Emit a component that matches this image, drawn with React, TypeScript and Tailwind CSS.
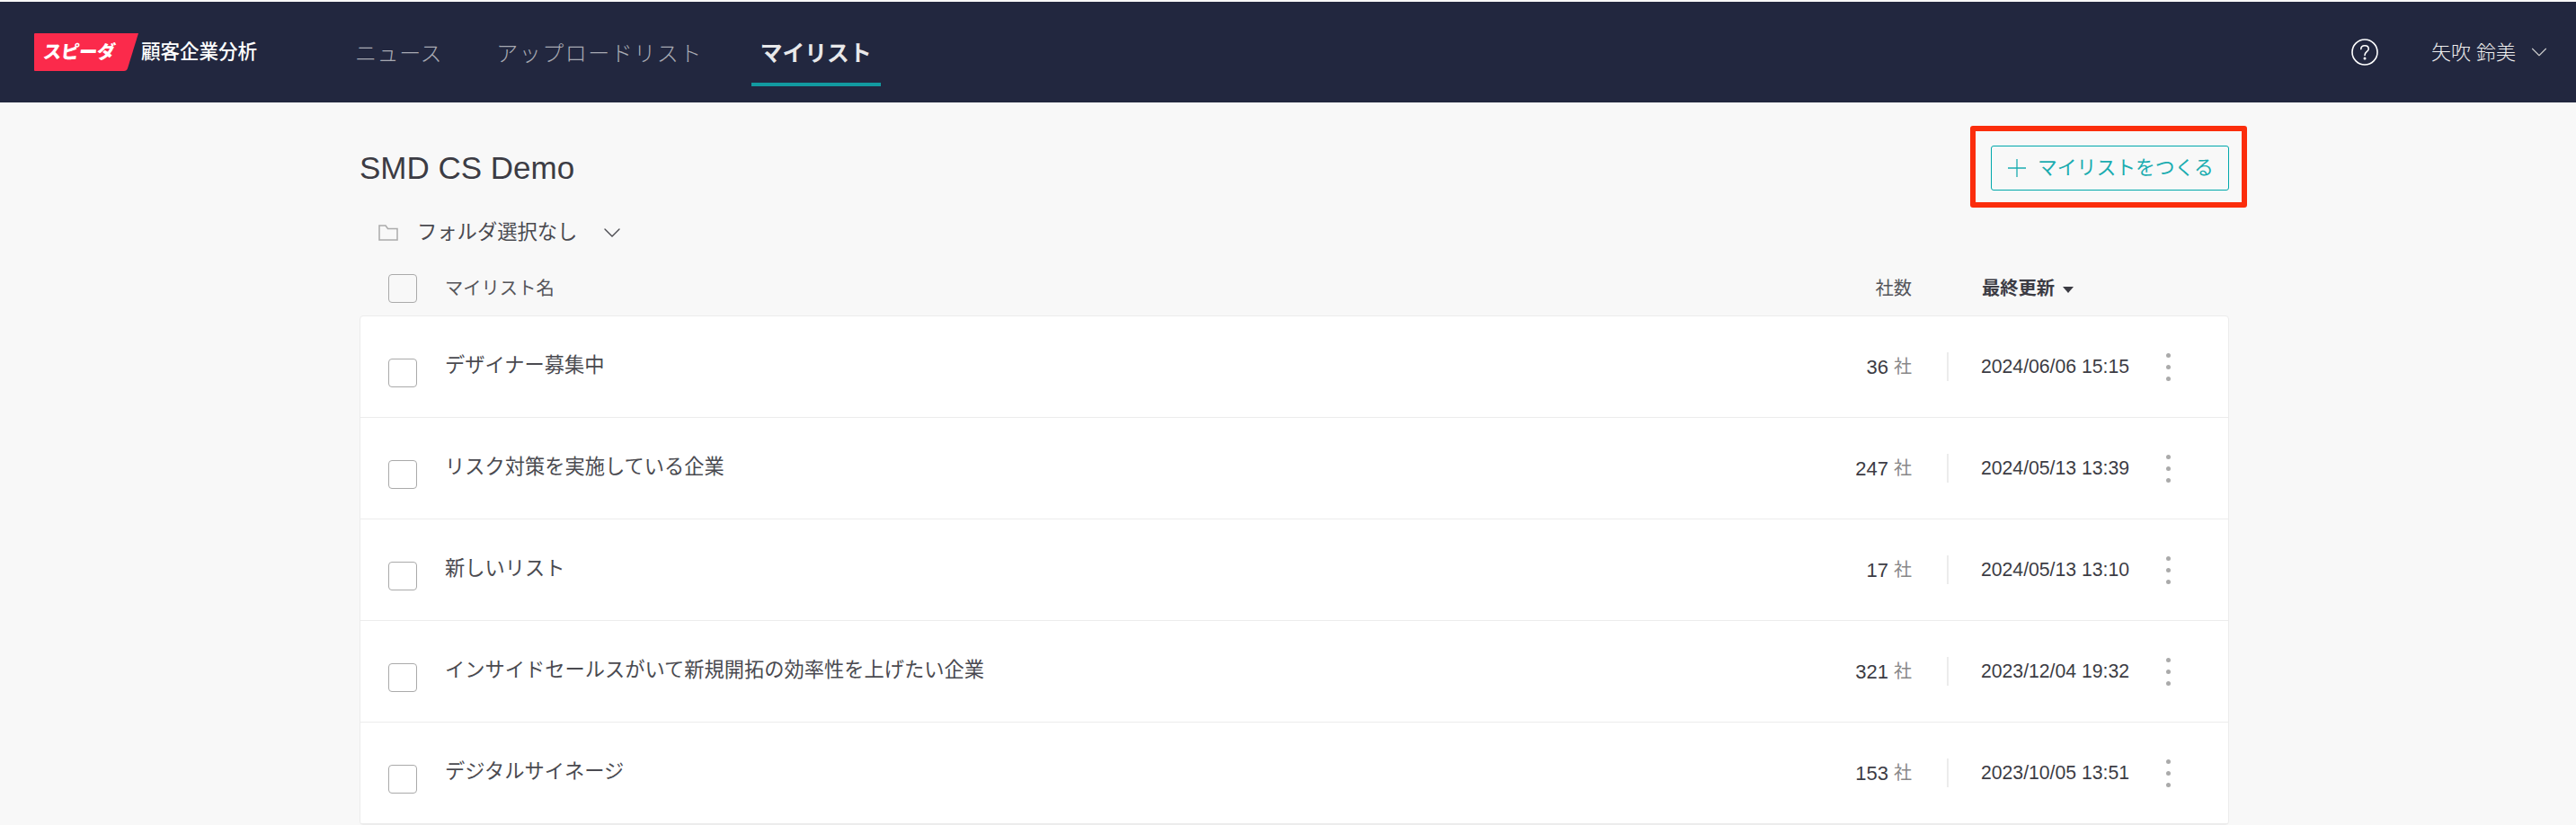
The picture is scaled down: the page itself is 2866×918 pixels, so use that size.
import { ChevronDown } from "lucide-react";

const rows = [
  { name: "デザイナー募集中", count: 36, date: "2024/06/06 15:15" },
  { name: "リスク対策を実施している企業", count: 247, date: "2024/05/13 13:39" },
  { name: "新しいリスト", count: 17, date: "2024/05/13 13:10" },
  { name: "インサイドセールスがいて新規開拓の効率性を上げたい企業", count: 321, date: "2023/12/04 19:32" },
  { name: "デジタルサイネージ", count: 153, date: "2023/10/05 13:51" },
];

function Checkbox({ className = "" }: { className?: string }) {
  return <div className={`h-8 w-8 shrink-0 rounded-[4px] border border-[#aaaaaa] ${className}`} />;
}

function Logo() {
  return (
    <div className="flex items-center">
      <div className="relative h-[42px] w-[116px]">
        <svg width="116" height="42" viewBox="0 0 116 42" className="block">
          <path d="M1 0H116L104 39Q103 42 100 42H1Q0 42 0 41V1Q0 0 1 0Z" fill="#fb2a4b" />
        </svg>
        <span className="absolute left-[10px] top-[6px] -skew-x-6 text-[20.5px] leading-[30px] font-black tracking-[-0.5px] text-white">
          スピーダ
        </span>
      </div>
      <span className="ml-[3px] text-[21.5px] font-medium text-white">顧客企業分析</span>
    </div>
  );
}

function Header() {
  return (
    <header className="mt-[2px] flex h-[112px] items-center bg-[#22273f] pl-[38px] pr-[26px]">
      <Logo />
      <nav className="ml-[110px] flex h-full items-center pt-[3px]">
        <span className="-ml-[1px] text-[24px] tracking-[0.6px] font-light text-[#a8aab3]">ニュース</span>
        <span className="ml-[60px] text-[24px] tracking-[1.5px] font-light text-[#a8aab3]">アップロードリスト</span>
        <div className="relative ml-[54px] flex h-full w-[144px] items-center justify-center">
          <span className="text-[24.8px] font-bold text-[#e8e8ea]">マイリスト</span>
          <div className="absolute bottom-[18px] left-0 h-1 w-full bg-[#129aa0]" />
        </div>
      </nav>
      <div className="ml-auto flex items-center">
        <svg width="30" height="30" viewBox="0 0 30 30" fill="none" stroke="white" strokeWidth="1.6">
          <circle cx="15" cy="15" r="14" />
          <path d="M10.8 11.6C10.8 9.2 12.6 7.8 15 7.8C17.4 7.8 19.2 9.2 19.2 11.4C19.2 14.4 15 14.6 15 18.4" strokeLinecap="round" />
          <circle cx="15" cy="22" r="0.7" fill="white" />
        </svg>
        <span className="ml-[59px] text-[22px] font-light text-[#eeeeee]">矢吹 鈴美</span>
        <ChevronDown className="ml-[11px] h-[30px] w-[30px] text-[#cccccc]" strokeWidth={0.9} />
      </div>
    </header>
  );
}

export default function App() {
  return (
    <div className="h-[918px] overflow-hidden bg-[#f8f8f8] font-['Liberation_Sans','Noto_Sans_CJK_JP',sans-serif] text-[#3c3c44]">
      <Header />
      <main className="ml-[400px] w-[2080px]">
        <div className="flex items-center justify-between pt-[48px]">
          <h1 className="text-[35px] leading-[50px]">SMD CS Demo</h1>
          <div className="relative">
            <button className="flex h-[50px] w-[265px] items-center rounded-[3px] border border-[#00a8ab] pl-[18px] text-[21.8px] text-[#1aacb0]">
              <svg width="20" height="20" viewBox="0 0 20 20" stroke="currentColor" strokeWidth="1.3">
                <path d="M10 0V20M0 10H20" />
              </svg>
              <span className="ml-[13px]">マイリストをつくる</span>
            </button>
            {/* red annotation box */}
            <div className="absolute -bottom-[19px] -left-[23px] -right-[20px] -top-[22px] rounded-[3px] border-[6px] border-[#fb2d0c]" />
          </div>
        </div>

        <div className="mt-[27px] flex h-[40px] items-center pl-[21px] text-[22.3px] text-[#4a4a50]">
          <svg width="22" height="18" viewBox="0 0 22 18" fill="none" stroke="#aaaaaa" strokeWidth="1.5">
            <path d="M1 17V1H8L10.5 4.5H21V17Z" />
          </svg>
          <span className="ml-[21px]">フォルダ選択なし</span>
          <ChevronDown className="ml-[23px] h-8 w-8" strokeWidth={1} />
        </div>

        <div className="mb-[14px] mt-[26px] flex h-[32px] items-center pl-[32px] text-[20.3px] text-[#55555a]">
          <Checkbox />
          <span className="ml-[31px] flex-1">マイリスト名</span>
          <span className="mr-[78px]">社数</span>
          <span className="w-[192px] font-bold text-[#3c3c44]">
            最終更新
            <span className="ml-[9px] inline-block border-x-[6px] border-t-[7px] border-x-transparent border-t-[#3c3c44] align-middle" />
          </span>
          <span className="w-[83px]" />
        </div>

        <div className="rounded-[4px] border border-[#ececec] bg-white">
          {rows.map((row) => (
            <div key={row.name} className="flex h-[113px] items-center border-b border-[#ececec] pl-[31px]">
              <Checkbox className="mt-[13px]" />
              <span className="mb-[3px] ml-[31px] flex-1 text-[22.26px] text-[#4a4a50]">{row.name}</span>
              <span className="text-[22px]">{row.count}</span>
              <span className="ml-[6px] text-[20px] text-[#888888]">社</span>
              <div className="ml-[39px] h-8 w-[2px] bg-[#ececec]" />
              <span className="ml-[36px] w-[164px] whitespace-nowrap text-[21.2px]">{row.date}</span>
              <div className="ml-[42px] mr-[64px] flex flex-col gap-2">
                <div className="h-[5px] w-[5px] rounded-full bg-[#aaaaaa]" />
                <div className="h-[5px] w-[5px] rounded-full bg-[#aaaaaa]" />
                <div className="h-[5px] w-[5px] rounded-full bg-[#aaaaaa]" />
              </div>
            </div>
          ))}
        </div>
      </main>
    </div>
  );
}
